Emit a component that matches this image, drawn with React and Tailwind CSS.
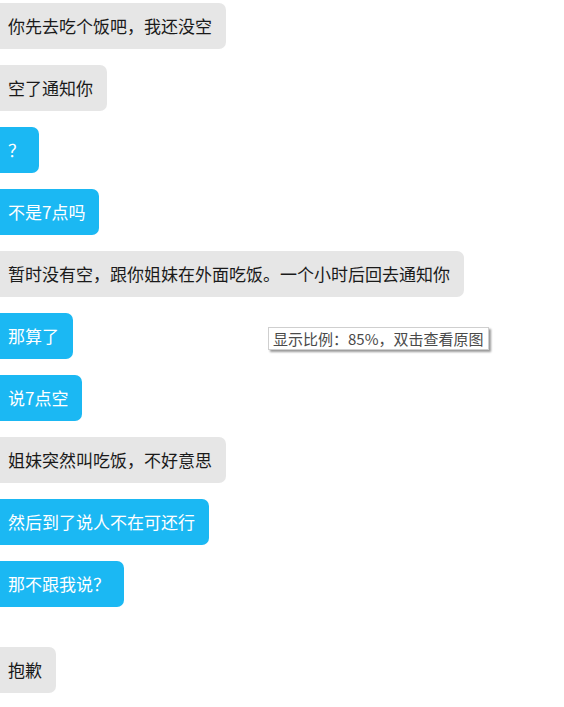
const messages = [
  { text: "你先去吃个饭吧，我还没空", mine: false },
  { text: "空了通知你", mine: false },
  { text: "？", mine: true },
  { text: "不是7点吗", mine: true },
  { text: "暂时没有空，跟你姐妹在外面吃饭。一个小时后回去通知你", mine: false },
  { text: "那算了", mine: true },
  { text: "说7点空", mine: true },
  { text: "姐妹突然叫吃饭，不好意思", mine: false },
  { text: "然后到了说人不在可还行", mine: true },
  { text: "那不跟我说？", mine: true },
  { text: "抱歉", mine: false, later: true },
];

function Bubble({ msg }) {
  const tone = msg.mine
    ? "bg-[#1bb8f3] text-white"
    : "bg-[#e6e6e6] text-[#1a1a1a]";
  return (
    <div className={msg.later ? "mt-[40px]" : "mt-[16px] first:mt-0"}>
      <div
        className={`inline-block h-[46px] rounded-r-[7px] pl-[8px] pr-[14px] py-[10px] text-[17px] leading-[26px] ${tone}`}
      >
        {msg.text}
      </div>
    </div>
  );
}

export default function App() {
  return (
    <div
      className="relative min-h-[707px] w-[564px] overflow-hidden bg-white pt-[3px]"
      style={{ fontFamily: '"Noto Sans CJK SC", "Liberation Sans", sans-serif' }}
    >
      {messages.map((msg, i) => (
        <Bubble key={i} msg={msg} />
      ))}

      <div className="absolute left-[268px] top-[327px] h-[23px] w-[221px] whitespace-nowrap border border-[#cfcfcf] bg-white px-[4px] text-[15px] leading-[21px] text-[#4a4a4a] shadow-[2px_2px_2px_#9a9a9a]">
        显示比例：85%，双击查看原图
      </div>
    </div>
  );
}
